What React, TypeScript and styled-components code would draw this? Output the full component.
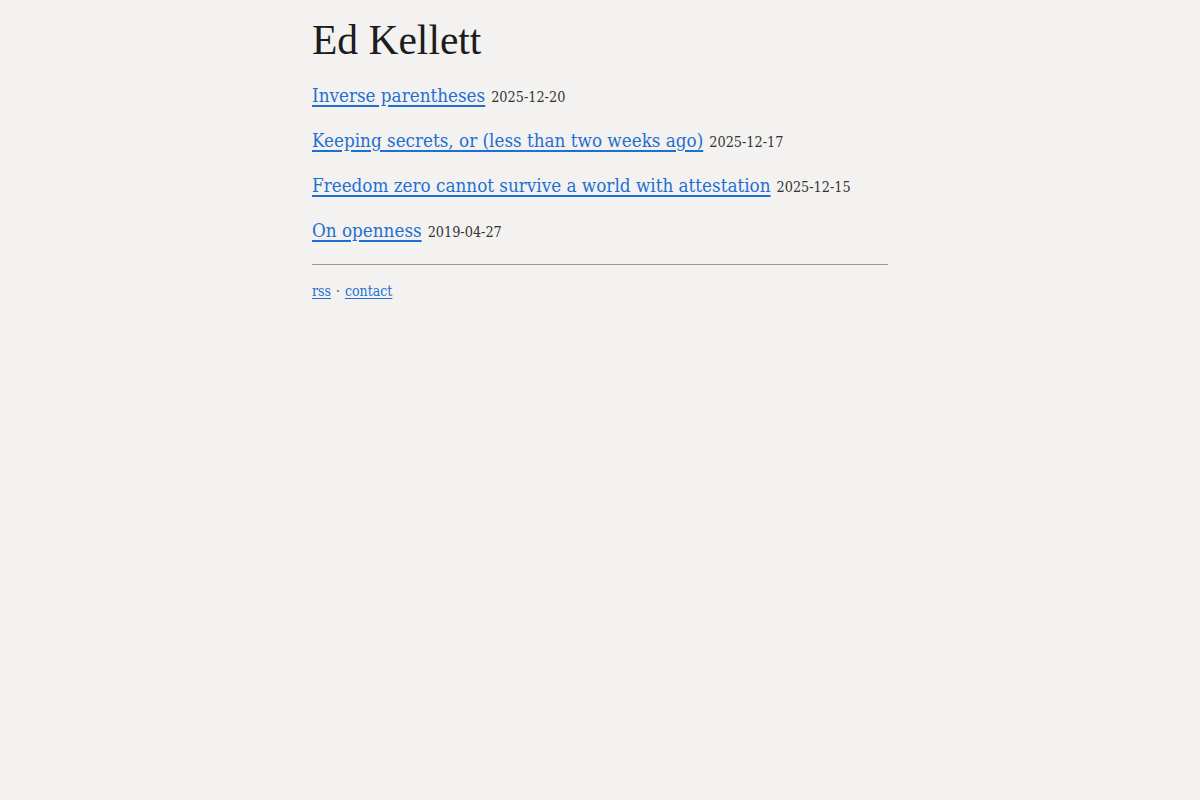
import React from "react";
import styled, { createGlobalStyle } from "styled-components";

const GlobalStyle = createGlobalStyle`
  html, body {
    margin: 0;
    padding: 0;
    background: #f3f2f0;
  }
  body {
    font-family: "DejaVu Serif", serif;
    font-stretch: condensed;
    color: #222;
  }
`;

interface Post {
  title: string;
  date: string;
}

const posts: Post[] = [
  { title: "Inverse parentheses", date: "2025-12-20" },
  { title: "Keeping secrets, or (less than two weeks ago)", date: "2025-12-17" },
  { title: "Freedom zero cannot survive a world with attestation", date: "2025-12-15" },
  { title: "On openness", date: "2019-04-27" },
];

export default function App() {
  return (
    <>
      <GlobalStyle />
      <Page>
        <Title>Ed Kellett</Title>
        <PostList>
          {posts.map((p) => (
            <PostItem key={p.title}>
              <PostLink href="#">{p.title}</PostLink>
              <PostDate>{p.date}</PostDate>
            </PostItem>
          ))}
        </PostList>
        <Rule />
        <Footer>
          <FooterLink href="#">rss</FooterLink>
          <Sep>·</Sep>
          <FooterLink href="#">contact</FooterLink>
        </Footer>
      </Page>
    </>
  );
}

const Page = styled.main`
  width: 576px;
  margin: 0 auto;
  padding-top: 15px;
`;

const Title = styled.h1`
  font-family: "Liberation Serif", serif;
  font-stretch: normal;
  font-weight: normal;
  font-size: 41.5px;
  line-height: 50px;
  color: #1c1c1c;
  margin: 0 0 17px;
`;

const PostList = styled.ul`
  list-style: none;
  margin: 0;
  padding: 0;
  display: flex;
  flex-direction: column;
  gap: 17px;
`;

const PostItem = styled.li`
  font-size: 18.7px;
  line-height: 28px;
`;

const PostLink = styled.a`
  color: #1f6fd1;
  text-decoration: underline;
  text-decoration-thickness: 2px;
  text-underline-offset: 3px;
`;

const PostDate = styled.span`
  font-size: 14.3px;
  line-height: 1;
  color: #333;
  margin-left: 6px;
`;

const Rule = styled.hr`
  border: none;
  border-top: 1px solid #999;
  margin: 19px 0 18px;
`;

const Footer = styled.footer`
  font-size: 14px;
  color: #555;
  display: flex;
  gap: 5px;
`;

const FooterLink = styled.a`
  color: #1f6fd1;
  text-underline-offset: 2px;
`;

const Sep = styled.span``;
